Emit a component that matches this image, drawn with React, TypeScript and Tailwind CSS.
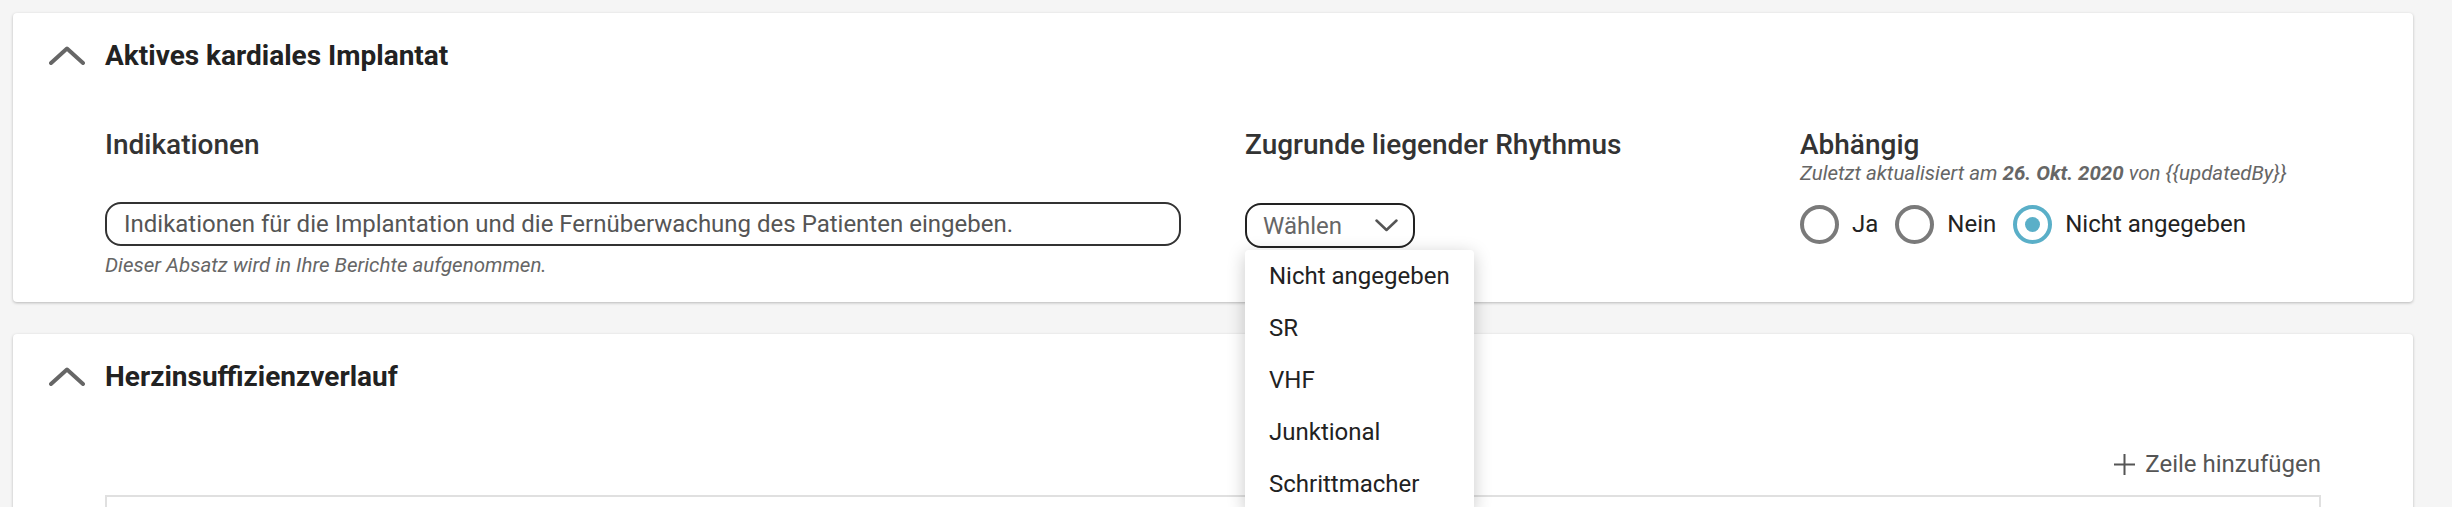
import { useState } from "react";

const font = { fontFamily: "Roboto, 'Noto Sans', sans-serif" };

function ChevronUp() {
  return (
    <svg width="36" height="19" viewBox="0 0 36 19" fill="none" className="shrink-0 -mt-[2px]">
      <path d="M2 17L18 2.5L34 17" stroke="#666" strokeWidth="4" strokeLinecap="round" strokeLinejoin="round" />
    </svg>
  );
}

function ChevronDown() {
  return (
    <svg width="23" height="13" viewBox="0 0 23 13" fill="none">
      <path d="M1.5 1.5L11.5 11L21.5 1.5" stroke="#555" strokeWidth="2.5" strokeLinecap="round" strokeLinejoin="round" />
    </svg>
  );
}

function Radio({ label, checked }: { label: string; checked?: boolean }) {
  return (
    <label className="flex items-center gap-[13px] cursor-pointer">
      <span
        className={
          checked
            ? "w-[39px] h-[39px] rounded-full border-[4px] border-[#5aafc8] flex items-center justify-center"
            : "w-[39px] h-[39px] rounded-full border-[4px] border-[#7a7a7a]"
        }
      >
        {checked && <span className="w-[15px] h-[15px] rounded-full bg-[#5aafc8]" />}
      </span>
      <span className="text-[24px] leading-[28px] text-[#222]">{label}</span>
    </label>
  );
}

const rhythms = ["Nicht angegeben", "SR", "VHF", "Junktional", "Schrittmacher"];

export default function App() {
  const [open] = useState(true);

  return (
    <div className="h-screen overflow-hidden bg-[#f5f5f5] pt-[13px] pl-[13px] pr-[39px]" style={font}>
      <div className="flex flex-col gap-[32px]">
        {/* Aktives kardiales Implantat */}
        <section className="bg-white rounded-[4px] shadow-[0_1px_3px_rgba(0,0,0,0.25)] pt-[27px] pb-[25px] pl-[36px] pr-[92px]">
          <div className="flex items-center gap-[20px] h-[32px]">
            <ChevronUp />
            <h2 className="text-[28px] leading-[32px] font-bold text-[#222]">Aktives kardiales Implantat</h2>
          </div>

          <div className="pl-[56px] mt-[57px] grid grid-cols-[1076px_491px_1fr] gap-x-[64px] gap-y-[17px]">
            <div className="text-[28px] leading-[32px] font-medium text-[#333]">Indikationen</div>
            <div className="text-[28px] leading-[32px] font-medium text-[#333]">Zugrunde liegender Rhythmus</div>
            <div>
              <div className="text-[28px] leading-[32px] font-medium text-[#333]">Abhängig</div>
              <div className="mt-[1px] text-[20.5px] leading-[23px] italic text-[#666]">
                Zuletzt aktualisiert am <span className="font-bold">26. Okt. 2020</span> von {"{{updatedBy}}"}
              </div>
            </div>

            <div>
              <input
                className="w-full h-[44px] rounded-[16px] border-2 border-[#333] px-[17px] text-[24px] text-[#333] placeholder:text-[#555] outline-none"
                placeholder="Indikationen für die Implantation und die Fernüberwachung des Patienten eingeben."
                style={font}
              />
              <p className="mt-[7px] text-[20.5px] leading-[24px] italic text-[#666]">
                Dieser Absatz wird in Ihre Berichte aufgenommen.
              </p>
            </div>

            <div className="relative">
              <button className="w-[170px] h-[45px] mt-[1px] rounded-[16px] border-2 border-[#222] flex items-center justify-between pl-[16px] pr-[15px] bg-white">
                <span className="text-[24px] text-[#666]">Wählen</span>
                <ChevronDown />
              </button>
              {open && (
                <ul className="absolute z-10 top-[48px] left-0 w-[229px] bg-white rounded-[4px] shadow-[0_4px_18px_rgba(0,0,0,0.22)]">
                  {rhythms.map((r) => (
                    <li key={r} className="h-[52px] pl-[24px] flex items-center text-[24px] text-[#222]">
                      {r}
                    </li>
                  ))}
                </ul>
              )}
            </div>

            <div className="flex items-center gap-[17px] h-[44px] self-start">
              <Radio label="Ja" />
              <Radio label="Nein" />
              <Radio label="Nicht angegeben" checked />
            </div>
          </div>
        </section>

        {/* Herzinsuffizienzverlauf */}
        <section className="bg-white rounded-[4px] shadow-[0_1px_3px_rgba(0,0,0,0.25)] pt-[27px] pb-[40px] pl-[36px] pr-[92px]">
          <div className="flex items-center gap-[20px] h-[32px]">
            <ChevronUp />
            <h2 className="text-[28px] leading-[32px] font-bold text-[#222]">Herzinsuffizienzverlauf</h2>
          </div>

          <div className="pl-[56px] mt-[57px]">
            <div className="flex justify-end">
              <button className="flex items-center gap-[9px] h-[28px] text-[24px] leading-[28px] text-[#555]">
                <svg width="23" height="23" viewBox="0 0 23 23" fill="none">
                  <path d="M11.5 1V22M1 11.5H22" stroke="#555" strokeWidth="2" />
                </svg>
                Zeile hinzufügen
              </button>
            </div>
            <div className="mt-[17px] h-[160px] border-2 border-[#e0e0e0]" />
          </div>
        </section>
      </div>
    </div>
  );
}
